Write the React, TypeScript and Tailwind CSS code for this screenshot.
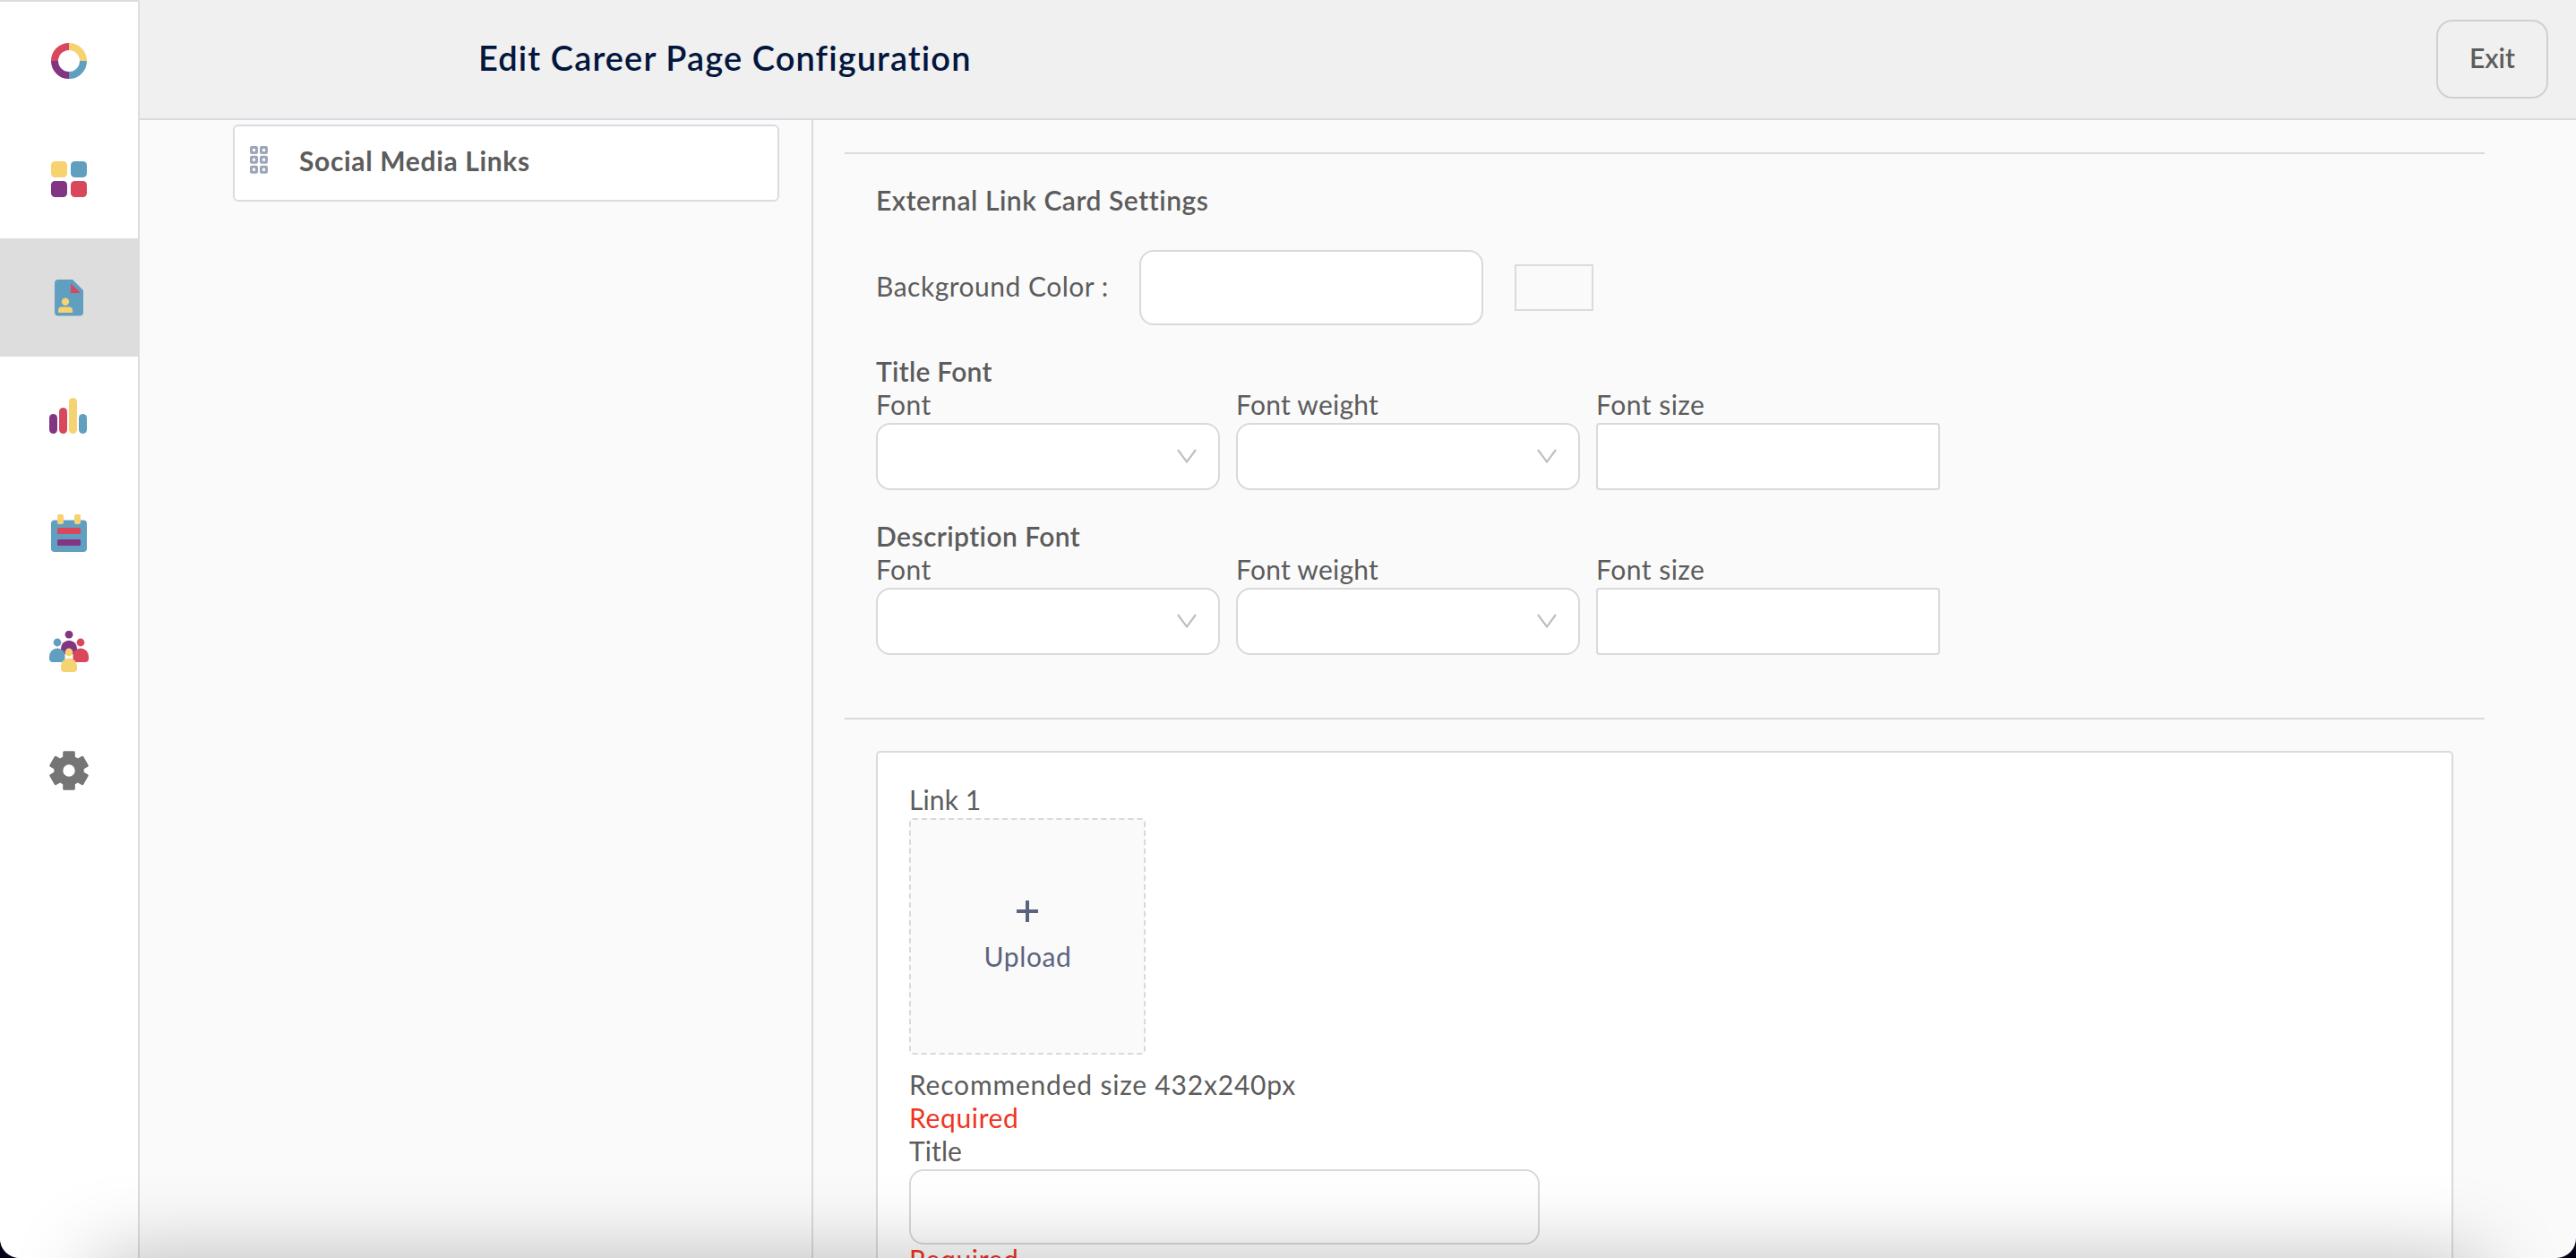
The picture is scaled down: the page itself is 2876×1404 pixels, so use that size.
import type { ReactNode } from "react";

const colors = {
  red: "#d9475c",
  yellow: "#f6d271",
  blue: "#619fc1",
  purple: "#823583",
};

function Icon({ children }: { children: ReactNode }) {
  return (
    <svg width="48" height="48" viewBox="0 0 48 48" fill="none">
      {children}
    </svg>
  );
}

function LogoIcon() {
  return (
    <Icon>
      <g strokeWidth="8">
        <path d="M24 8A16 16 0 0 1 40 24" stroke={colors.yellow} />
        <path d="M40 24A16 16 0 0 1 24 40" stroke={colors.blue} />
        <path d="M24 40A16 16 0 0 1 8 24" stroke={colors.purple} />
        <path d="M8 24A16 16 0 0 1 24 8" stroke={colors.red} />
      </g>
    </Icon>
  );
}

function DashboardIcon() {
  return (
    <Icon>
      <rect x="4" y="4" width="18" height="18" rx="4.5" fill={colors.yellow} />
      <rect x="26" y="4" width="18" height="18" rx="4.5" fill={colors.blue} />
      <rect x="4" y="26" width="18" height="18" rx="4.5" fill={colors.purple} />
      <rect x="26" y="26" width="18" height="18" rx="4.5" fill={colors.red} />
    </Icon>
  );
}

function ResumeIcon() {
  return (
    <Icon>
      <path
        d="M12 4H28L40 16V40.5a4 4 0 0 1-4 4H12a4 4 0 0 1-4-4V8a4 4 0 0 1 4-4z"
        fill={colors.blue}
      />
      <path d="M26 8.5V19H37z" fill={colors.red} />
      <circle cx="20" cy="28.7" r="4.2" fill={colors.yellow} />
      <path
        d="M12 41V38.5a4 4 0 0 1 4-4H24a4 4 0 0 1 4 4V41z"
        fill={colors.yellow}
      />
    </Icon>
  );
}

function ReportsIcon() {
  return (
    <Icon>
      <rect x="2" y="22" width="9" height="22" rx="4.5" fill={colors.purple} />
      <rect x="13" y="15" width="9" height="29" rx="4.5" fill={colors.red} />
      <rect x="24" y="4" width="9" height="40" rx="4.5" fill={colors.yellow} />
      <rect x="35" y="22" width="9" height="22" rx="4.5" fill={colors.blue} />
    </Icon>
  );
}

function CalendarIcon() {
  return (
    <Icon>
      <rect x="4" y="8.5" width="40" height="35.5" rx="4" fill={colors.blue} />
      <rect x="11" y="2" width="7" height="11" rx="2" fill={colors.yellow} />
      <rect x="30" y="2" width="7" height="11" rx="2" fill={colors.yellow} />
      <rect x="11" y="17" width="26" height="7" rx="1.5" fill={colors.red} />
      <rect x="11" y="30" width="26" height="7" rx="1.5" fill={colors.purple} />
    </Icon>
  );
}

function Person({ x, y, color }: { x: number; y: number; color: string }) {
  return (
    <g transform={`translate(${x} ${y})`} fill={color}>
      <circle cx="0" cy="0" r="4.4" />
      <path d="M-9 15.5a9 9 0 0 1 18 0V18a4 4 0 0 1-4 4H-5a4 4 0 0 1-4-4z" />
    </g>
  );
}

function TeamIcon() {
  return (
    <Icon>
      <Person x={24} y={4.2} color={colors.purple} />
      <Person x={11} y={13} color={colors.blue} />
      <Person x={37} y={13} color={colors.red} />
      <path d="M19.5 26.5H28.5V32H19.5z" fill="#fff" />
      <Person x={24} y={24} color={colors.yellow} />
    </Icon>
  );
}

function SettingsIcon() {
  return (
    <Icon>
      <circle cx="24" cy="24" r="11.7" stroke="#757575" strokeWidth="10" />
      {[0, 60, 120, 180, 240, 300].map((angle) => (
        <rect
          key={angle}
          x="17.2"
          y="2.2"
          width="13.6"
          height="12"
          rx="1.5"
          fill="#757575"
          transform={`rotate(${angle} 24 24)`}
        />
      ))}
    </Icon>
  );
}

const navItems = [
  { name: "home", icon: <LogoIcon /> },
  { name: "dashboard", icon: <DashboardIcon /> },
  { name: "resumes", icon: <ResumeIcon />, active: true },
  { name: "reports", icon: <ReportsIcon /> },
  { name: "calendar", icon: <CalendarIcon /> },
  { name: "team", icon: <TeamIcon /> },
  { name: "settings", icon: <SettingsIcon /> },
];

function Sidebar() {
  return (
    <nav className="flex w-[156px] shrink-0 flex-col border-t-2 border-r-2 border-[#dddddd] bg-white">
      {navItems.map((item) => (
        <div
          key={item.name}
          className={
            item.active
              ? "flex h-[132px] items-center justify-center bg-[#dddddd]"
              : "flex h-[132px] items-center justify-center"
          }
        >
          {item.icon}
        </div>
      ))}
    </nav>
  );
}

function DragHandle() {
  return (
    <svg width="20" height="31" viewBox="0 0 20 31" fill="none">
      {[1.5, 12.5].map((x) =>
        [1.5, 12.3, 23.2].map((y) => (
          <rect
            key={`${x}-${y}`}
            x={x}
            y={y}
            width="6"
            height="6"
            rx="0.5"
            stroke="#a0a6b9"
            strokeWidth="3"
          />
        )),
      )}
    </svg>
  );
}

function Line({
  children,
  className = "tracking-[0.4px]",
}: {
  children: ReactNode;
  className?: string;
}) {
  return <div className={`h-[37px] leading-[33px] whitespace-nowrap ${className}`}>{children}</div>;
}

function Select() {
  return (
    <div className="flex h-[75px] w-[384px] items-center justify-end rounded-[16px] border-2 border-[#d9d9d9] bg-white pr-6">
      <svg width="22" height="17" viewBox="0 0 22 17" fill="none">
        <path d="M1 1L11 14.5L21 1" stroke="#bfbfbf" strokeWidth="2.2" />
      </svg>
    </div>
  );
}

function FontFields({ title, titleClass }: { title: string; titleClass: string }) {
  return (
    <section className="mt-[35px]">
      <Line className={titleClass}>{title}</Line>
      <div className="flex gap-[18px]">
        <div>
          <Line>Font</Line>
          <Select />
        </div>
        <div>
          <Line className="tracking-[0.25px]">Font weight</Line>
          <Select />
        </div>
        <div>
          <Line className="tracking-[0.5px]">Font size</Line>
          <div className="h-[75px] w-[384px] rounded-[4px] border-2 border-[#d9d9d9] bg-white" />
        </div>
      </div>
    </section>
  );
}

function LinkCard() {
  return (
    <section className="mx-[35px] mt-[35px] h-[700px] rounded-[5px] border-2 border-[#dadae1] bg-white px-[35px] pt-9">
      <Line className="tracking-[0.1px]">Link 1</Line>
      <div className="flex size-[264px] flex-col items-center rounded-[4px] border-2 border-dashed border-[#d9d9d9] bg-[#fafafa] pt-[90px] text-[#5a647e]">
        <svg width="24" height="24" viewBox="0 0 24 24" fill="none">
          <path d="M12 0V24M0 12H24" stroke="currentColor" strokeWidth="4" />
        </svg>
        <Line className="mt-[22px] pl-px tracking-[0.6px]">Upload</Line>
      </div>
      <Line className="mt-[17px] tracking-[0.8px]">Recommended size 432x240px</Line>
      <Line className="tracking-[0.65px] text-[#f0341f]">Required</Line>
      <Line className="tracking-[0.1px]">Title</Line>
      <div className="h-[84px] w-[704px] rounded-[16px] border-2 border-[#d9d9d9] bg-white" />
      <Line className="tracking-[0.65px] text-[#f0341f]">Required</Line>
    </section>
  );
}

export default function App() {
  return (
    <div className="h-[1404px] w-[2876px] bg-[#05001a]">
      <div className="relative flex h-full overflow-hidden rounded-b-[22px] bg-[#fafafa] font-['Lato',sans-serif] text-[30px] text-[#5c5c5c]">
        <Sidebar />
        <div className="flex min-w-0 flex-1 flex-col">
          <header className="flex h-[134px] shrink-0 items-start justify-between border-b-2 border-[#dadae1] bg-[#f0f0f0] pt-[22px] pr-[31px] pl-[378px]">
            <h1 className="pt-[19px] text-[38px] leading-[46px] font-semibold tracking-[1.1px] text-[#03163d]">
              Edit Career Page Configuration
            </h1>
            <button className="h-[88px] w-[125px] rounded-[18px] border-2 border-[#d0d0d0] pb-1 font-semibold">
              Exit
            </button>
          </header>
          <div className="flex min-h-0 flex-1">
            <aside className="w-[752px] shrink-0 border-r-2 border-[#dadae1] pt-[5px] pl-[104px]">
              <div className="flex h-[86px] w-[610px] items-start rounded-[6px] border-2 border-[#dadae1] bg-white pt-[22px] pl-[17px]">
                <DragHandle />
                <Line className="ml-[35px] font-bold tracking-[0.65px]">Social Media Links</Line>
              </div>
            </aside>
            <main className="flex-1 overflow-hidden pt-9 pr-[102px] pl-[35px]">
              <hr className="border-t-2 border-[#dadae1]" />
              <div className="px-[35px] pt-[35px]">
                <Line className="font-semibold tracking-[0.53px]">External Link Card Settings</Line>
                <div className="mt-[35px] flex h-[84px] items-center">
                  <Line className="w-[294px] tracking-[0.5px]">Background Color :</Line>
                  <div className="h-[84px] w-[384px] rounded-[16px] border-2 border-[#d9d9d9] bg-white" />
                  <div className="ml-[35px] h-[52px] w-[88px] border-2 border-[#dadae1]" />
                </div>
                <FontFields title="Title Font" titleClass="font-semibold tracking-[0.25px]" />
                <FontFields title="Description Font" titleClass="font-semibold tracking-[0.42px]" />
              </div>
              <hr className="mt-[70px] border-t-2 border-[#dadae1]" />
              <LinkCard />
            </main>
          </div>
        </div>
        <div className="pointer-events-none absolute top-full right-[105px] left-[105px] h-40 shadow-[0_0_90px_rgba(0,0,0,0.26)]" />
      </div>
    </div>
  );
}
